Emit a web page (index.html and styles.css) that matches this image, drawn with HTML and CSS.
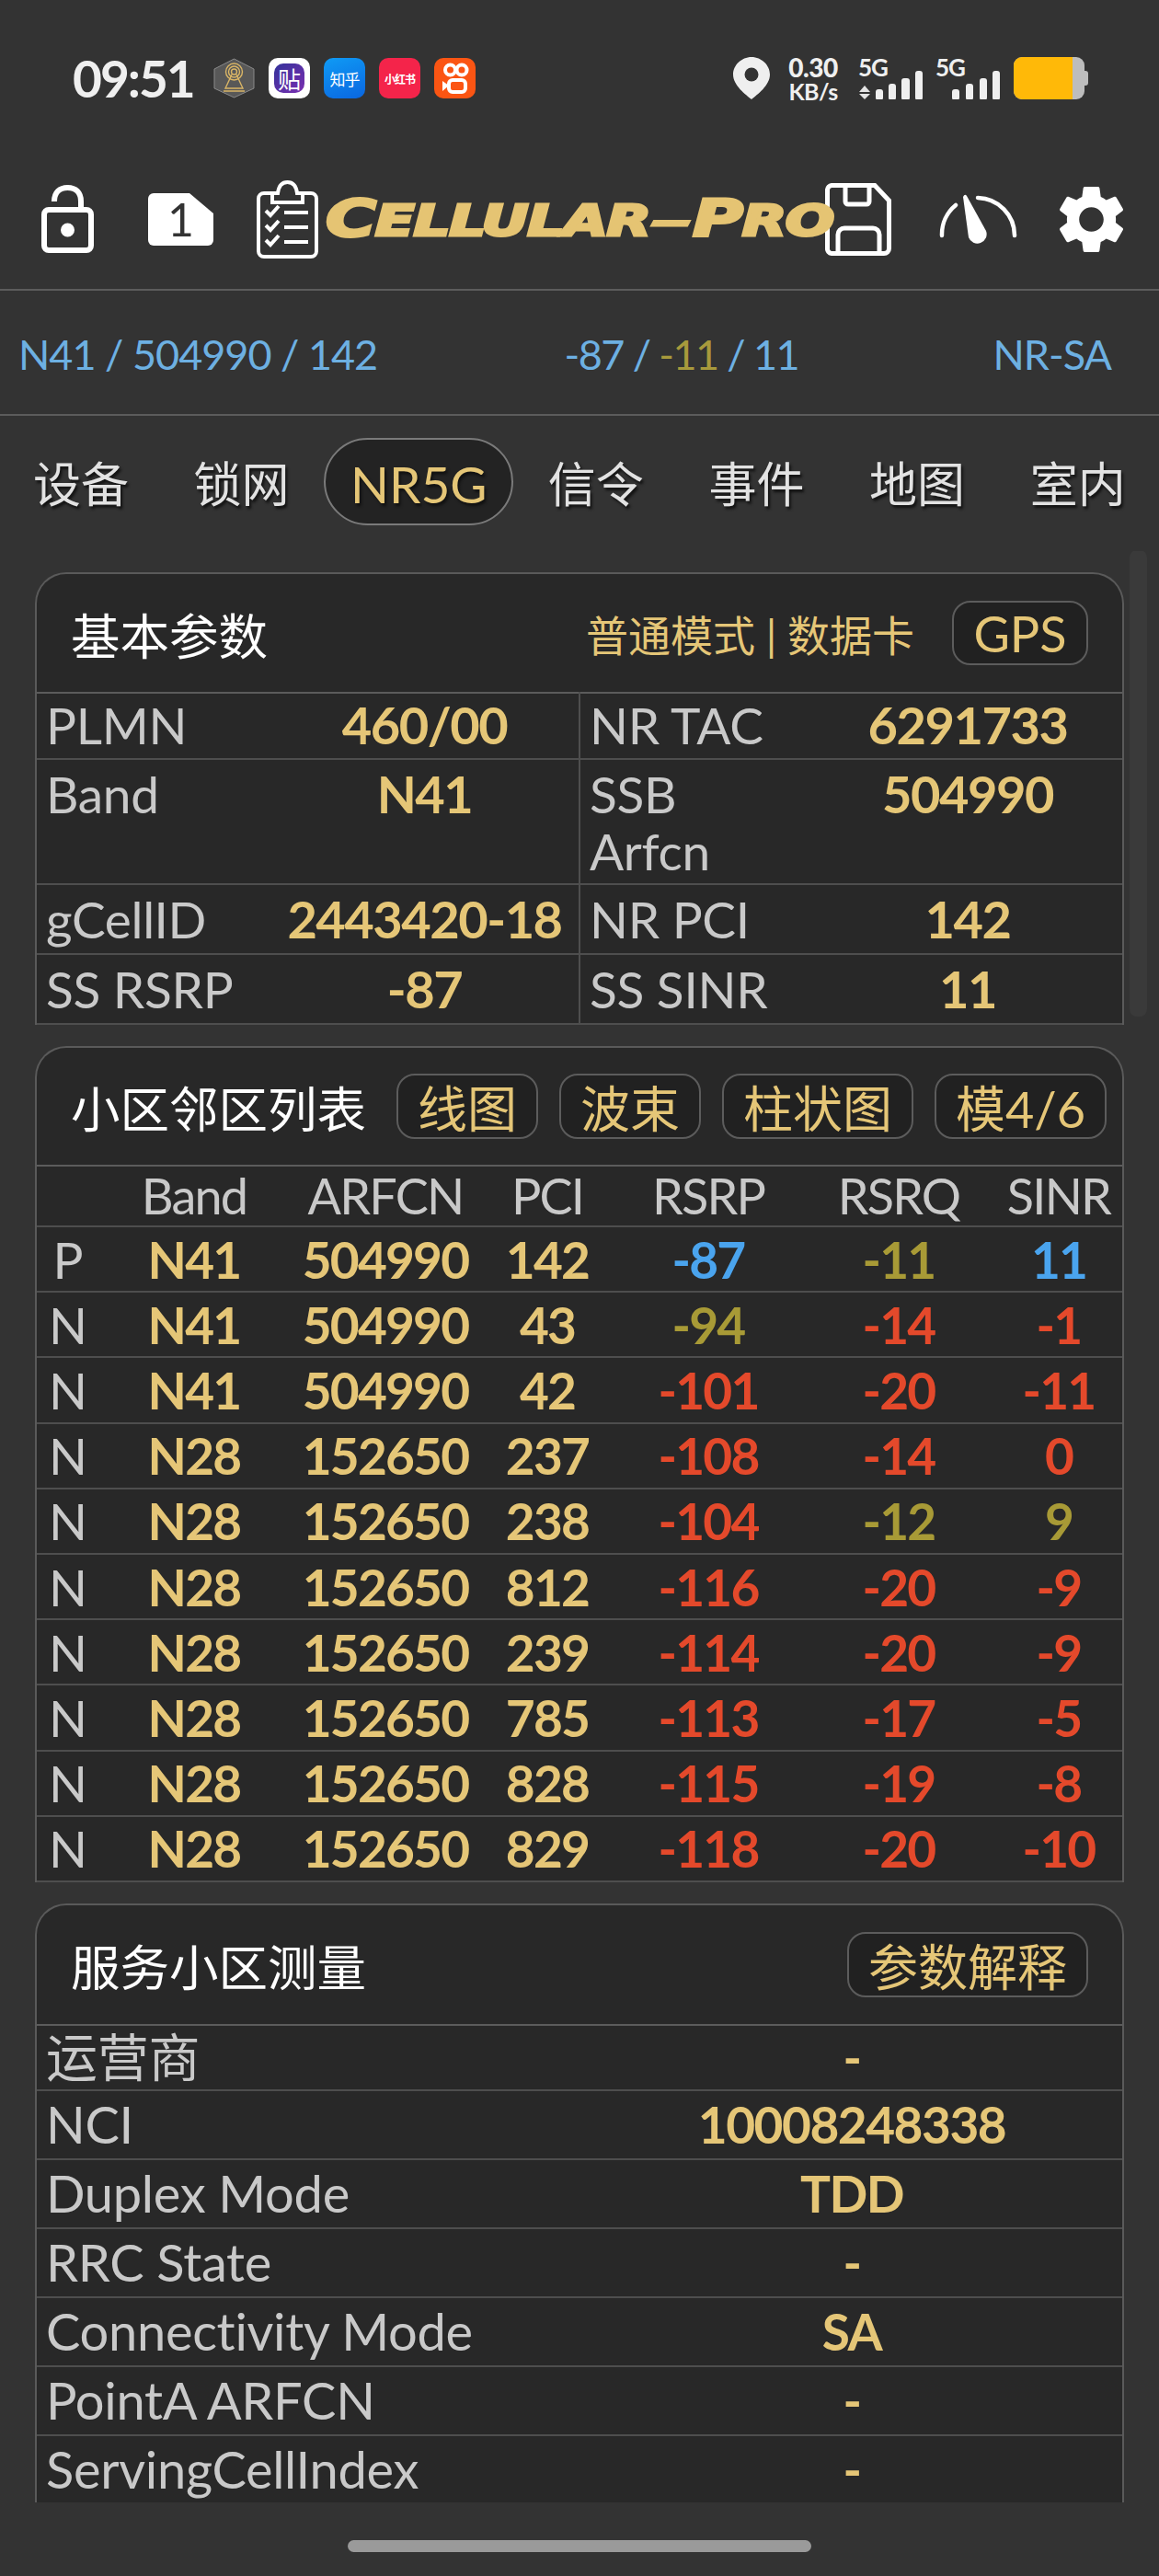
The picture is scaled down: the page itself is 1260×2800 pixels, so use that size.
FILE: index.html
```html
<!DOCTYPE html>
<html lang="en">
<head>
  <meta charset="UTF-8">
  <meta name="viewport" content="width=device-width, initial-scale=1.0">
  <title>Cellular-Pro | NR5G</title>
  <link rel="stylesheet" href="styles.css">
</head>
<body>
  <div class="screen">
    <!-- Status bar -->
    <div class="statusbar">
      <span class="time">09:51</span>
      <svg class="app-icon" viewBox="0 0 45 44">
        <polygon points="22.5,1 44,12 44,33 22.5,43 1,33 1,12" fill="#585858" stroke="#8a8a8a"/>
        <g fill="none" stroke="#d9b566" stroke-width="1.4">
          <circle cx="22.5" cy="15" r="3"/>
          <circle cx="22.5" cy="15" r="6"/>
          <circle cx="22.5" cy="15" r="9"/>
          <path d="M20 18 L13 33 H32 L25 18 M11 36 H34"/>
        </g>
      </svg>
      <span class="app-icon app-tie"><span class="tie-blob">贴</span></span>
      <span class="app-icon app-zhihu">知乎</span>
      <span class="app-icon app-xhs">小红书</span>
      <svg class="app-icon" viewBox="0 0 45 44">
        <rect width="45" height="44" rx="10" fill="#fb5513"/>
        <g fill="none" stroke="#fff" stroke-width="4">
          <circle cx="17.5" cy="13" r="5.5"/>
          <circle cx="30" cy="13" r="5.5"/>
          <rect x="16" y="24" width="18" height="13" rx="4"/>
        </g>
        <path d="M16 30 L9 25 V36 Z" fill="#fff"/>
      </svg>

      <div class="status-right">
        <svg class="pin" viewBox="0 0 40 46">
          <path d="M20 0 C9 0 0 9 0 19 C0 31 14 41 20 46 C26 41 40 31 40 19 C40 9 31 0 20 0 Z" fill="#efefef"/>
          <circle cx="20" cy="19" r="7.5" fill="#333"/>
        </svg>
        <div class="speed"><b>0.30</b><span>KB/s</span></div>
        <div class="signal">
          <svg viewBox="0 0 71 46">
            <polygon points="7,31 13,38 1,38" fill="#e4e4e4"/>
            <polygon points="1,40 13,40 7,46" fill="#e4e4e4"/>
            <rect x="19" y="35" width="8" height="12" rx="3" fill="#efefef"/>
            <rect x="33" y="29" width="8" height="18" rx="3" fill="#efefef"/>
            <rect x="47" y="23" width="9" height="24" rx="3" fill="#efefef"/>
            <rect x="62" y="15" width="8" height="32" rx="3" fill="#efefef"/>
          </svg>
          <span class="net-label">5G</span>
        </div>
        <div class="signal signal-second">
          <svg viewBox="0 0 71 46">
            <rect x="18" y="35" width="8" height="12" rx="3" fill="#efefef"/>
            <rect x="33" y="29" width="8" height="18" rx="3" fill="#efefef"/>
            <rect x="48" y="23" width="8" height="24" rx="3" fill="#efefef"/>
            <rect x="62" y="15" width="8" height="32" rx="3" fill="#efefef"/>
          </svg>
          <span class="net-label">5G</span>
        </div>
        <svg class="battery" viewBox="0 0 81 46">
          <rect x="74" y="15" width="7" height="16" rx="3" fill="#bdbdbd"/>
          <rect x="0" y="0" width="77" height="46" rx="9" fill="#bdbdbd"/>
          <path d="M9 0 H64 V46 H9 A9 9 0 0 1 0 37 V9 A9 9 0 0 1 9 0 Z" fill="#ffb908"/>
        </svg>
      </div>
    </div>

    <!-- Toolbar -->
    <div class="toolbar">
      <svg class="icon-lock" viewBox="0 0 57 74" fill="none" stroke="#fff" stroke-width="6">
        <path d="M14 18 C14 8 20 3 28.5 3 C37 3 43 8 43 18 V27"/>
        <rect x="3" y="27" width="51" height="44" rx="5"/>
        <circle cx="28.5" cy="49" r="7.5" fill="#fff" stroke="none"/>
      </svg>
      <div class="icon-sim">
        <svg viewBox="0 0 71 57">
          <path d="M6 0 H45 L71 22 V51 A6 6 0 0 1 65 57 H6 A6 6 0 0 1 0 51 V6 A6 6 0 0 1 6 0 Z" fill="#fff"/>
        </svg>
        <span class="sim-number">1</span>
      </div>
      <svg class="icon-clip" viewBox="0 0 67 85" fill="none" stroke="#fff" stroke-width="4">
        <rect x="2" y="14" width="63" height="69" rx="6"/>
        <path d="M17 24 V14 H23 C24 6 28 2 33.5 2 C39 2 43 6 44 14 H50 V24 Z" fill="#333"/>
        <path d="M30 35 H56 M30 51 H56 M30 67 H56"/>
        <path d="M10 33 L15 38 L24 28 M10 49 L15 54 L24 44 M10 65 L15 70 L24 60"/>
      </svg>
      <div class="logo-box">
        <div class="logo"><span class="logo-big">C</span>ELLULAR<span class="logo-dash">-</span><span class="logo-big">P</span>RO</div>
      </div>
      <svg class="icon-save" viewBox="0 0 72 79" fill="none" stroke="#fff" stroke-width="5">
        <path d="M7 2.5 H54 L69.5 19 V71 A5.5 5.5 0 0 1 64 76.5 H7 A5 5 0 0 1 2.5 71 V7 A5 5 0 0 1 7 2.5 Z"/>
        <path d="M22 3 V20 A3 3 0 0 0 25 23 H45 A3 3 0 0 0 48 20 V3"/>
        <path d="M14 76 V56 A7 7 0 0 1 21 49 H52 A7 7 0 0 1 59 56 V76"/>
      </svg>
      <svg class="icon-gauge" viewBox="0 0 86 56">
        <g fill="none" stroke="#fff" stroke-width="4.5" stroke-linecap="round">
          <path d="M3 46 A41 41 0 0 1 18 13"/>
          <path d="M42 5 A41 41 0 0 1 82 46"/>
        </g>
        <path d="M26 4 Q28 0 30 3 L51 41 A10 10 0 1 1 32 48 Z" fill="#fff"/>
      </svg>
      <svg class="icon-gear" viewBox="2.4 2.4 19.2 19.2">
        <path fill="#fff" fill-rule="evenodd" d="M19.14,12.94c0.04-0.3,0.06-0.61,0.06-0.94c0-0.32-0.02-0.64-0.07-0.94l2.03-1.58c0.18-0.14,0.23-0.41,0.12-0.61l-1.92-3.32c-0.12-0.22-0.37-0.29-0.59-0.22l-2.39,0.96c-0.5-0.38-1.03-0.7-1.62-0.94L14.4,2.81c-0.04-0.24-0.24-0.41-0.48-0.41h-3.84c-0.24,0-0.43,0.17-0.47,0.41L9.25,5.35C8.66,5.59,8.12,5.92,7.63,6.29L5.24,5.33c-0.22-0.08-0.47,0-0.59,0.22L2.74,8.87C2.62,9.08,2.66,9.34,2.86,9.48l2.03,1.58C4.84,11.36,4.8,11.69,4.8,12s0.02,0.64,0.07,0.94l-2.03,1.58c-0.18,0.14-0.23,0.41-0.12,0.61l1.92,3.32c0.12,0.22,0.37,0.29,0.59,0.22l2.39-0.96c0.5,0.38,1.03,0.7,1.62,0.94l0.36,2.54c0.05,0.24,0.24,0.41,0.48,0.41h3.84c0.24,0,0.44-0.17,0.47-0.41l0.36-2.54c0.59-0.24,1.13-0.56,1.62-0.94l2.39,0.96c0.22,0.08,0.47,0,0.59-0.22l1.92-3.32c0.12-0.22,0.07-0.47-0.12-0.61L19.14,12.94z M12,15.6c-1.98,0-3.6-1.62-3.6-3.6s1.62-3.6,3.6-3.6s3.6,1.62,3.6,3.6S13.98,15.6,12,15.6z"/>
      </svg>
    </div>

    <!-- Summary line -->
    <div class="summary">
      <span class="blue-soft">N41 / 504990 / 142</span>
      <span class="summary-mid"><span class="blue-soft">-87 / </span><span class="olive-soft">-11</span><span class="blue-soft"> / 11</span></span>
      <span class="blue-soft">NR-SA</span>
    </div>

    <!-- Tabs -->
    <nav class="tabs">
      <a>设备</a>
      <a>锁网</a>
      <a class="active">NR5G</a>
      <a>信令</a>
      <a>事件</a>
      <a>地图</a>
      <a>室内</a>
    </nav>

    <div class="content">
      <div class="scrollbar"></div>

      <!-- Basic params -->
      <section class="card">
        <div class="card-head">
          <h2>基本参数</h2>
          <div class="head-right">
            <span class="mode">普通模式 | 数据卡</span>
            <span class="btn btn-gps">GPS</span>
          </div>
        </div>
        <table class="params">
          <tr><td class="label">PLMN</td><td class="value">460/00</td><td class="label split">NR TAC</td><td class="value">6291733</td></tr>
          <tr class="tall"><td class="label">Band</td><td class="value">N41</td><td class="label split">SSB<br>Arfcn</td><td class="value">504990</td></tr>
          <tr><td class="label">gCellID</td><td class="value">2443420-18</td><td class="label split">NR PCI</td><td class="value">142</td></tr>
          <tr><td class="label">SS RSRP</td><td class="value">-87</td><td class="label split">SS SINR</td><td class="value">11</td></tr>
        </table>
      </section>

      <!-- Neighbour cells -->
      <section class="card">
        <div class="card-head head-cells">
          <h2>小区邻区列表</h2>
          <div class="btn-group">
            <span class="btn">线图</span>
            <span class="btn">波束</span>
            <span class="btn">柱状图</span>
            <span class="btn">模4/6</span>
          </div>
        </div>
        <table class="cells">
          <colgroup>
            <col class="c-type"><col class="c-band"><col class="c-arfcn"><col class="c-pci"><col class="c-rsrp"><col class="c-rsrq"><col class="c-sinr">
          </colgroup>
          <tr class="cells-head"><th></th><th>Band</th><th>ARFCN</th><th>PCI</th><th>RSRP</th><th>RSRQ</th><th>SINR</th></tr>
          <tr><td class="type">P</td><td>N41</td><td>504990</td><td>142</td><td class="blue">-87</td><td class="olive">-11</td><td class="blue">11</td></tr>
          <tr><td class="type">N</td><td>N41</td><td>504990</td><td>43</td><td class="olive">-94</td><td class="red">-14</td><td class="red">-1</td></tr>
          <tr><td class="type">N</td><td>N41</td><td>504990</td><td>42</td><td class="red">-101</td><td class="red">-20</td><td class="red">-11</td></tr>
          <tr><td class="type">N</td><td>N28</td><td>152650</td><td>237</td><td class="red">-108</td><td class="red">-14</td><td class="red">0</td></tr>
          <tr><td class="type">N</td><td>N28</td><td>152650</td><td>238</td><td class="red">-104</td><td class="olive">-12</td><td class="olive">9</td></tr>
          <tr><td class="type">N</td><td>N28</td><td>152650</td><td>812</td><td class="red">-116</td><td class="red">-20</td><td class="red">-9</td></tr>
          <tr><td class="type">N</td><td>N28</td><td>152650</td><td>239</td><td class="red">-114</td><td class="red">-20</td><td class="red">-9</td></tr>
          <tr><td class="type">N</td><td>N28</td><td>152650</td><td>785</td><td class="red">-113</td><td class="red">-17</td><td class="red">-5</td></tr>
          <tr><td class="type">N</td><td>N28</td><td>152650</td><td>828</td><td class="red">-115</td><td class="red">-19</td><td class="red">-8</td></tr>
          <tr><td class="type">N</td><td>N28</td><td>152650</td><td>829</td><td class="red">-118</td><td class="red">-20</td><td class="red">-10</td></tr>
        </table>
      </section>

      <!-- Serving cell -->
      <section class="card">
        <div class="card-head head-serving">
          <h2>服务小区测量</h2>
          <span class="btn">参数解释</span>
        </div>
        <table class="serving">
          <tr><td class="label">运营商</td><td class="value">-</td></tr>
          <tr><td class="label">NCI</td><td class="value">10008248338</td></tr>
          <tr><td class="label">Duplex Mode</td><td class="value">TDD</td></tr>
          <tr><td class="label">RRC State</td><td class="value">-</td></tr>
          <tr><td class="label">Connectivity Mode</td><td class="value">SA</td></tr>
          <tr><td class="label">PointA ARFCN</td><td class="value">-</td></tr>
          <tr><td class="label">ServingCellIndex</td><td class="value">-</td></tr>
        </table>
      </section>
    </div>

    <div class="home-area"><div class="home-bar"></div></div>
  </div>
</body>
</html>
```

FILE: styles.css
```css
* {
  margin: 0;
  padding: 0;
  box-sizing: border-box;
}

body {
  font-family: Lato, "Noto Sans CJK SC", sans-serif;
  background-color: #333333;
  overflow: hidden;
}

.screen {
  width: 1260px;
  height: 2800px;
  display: flex;
  flex-direction: column;
  overflow: hidden;
}

svg {
  display: block;
  flex: none;
}

/* Status bar */
.statusbar {
  height: 170px;
  display: flex;
  align-items: center;
  padding-left: 79px;
}

.time {
  width: 153px;
  font-size: 55px;
  font-weight: 700;
  letter-spacing: -2px;
  color: #efefef;
}

.app-icon {
  width: 45px;
  height: 44px;
  margin-right: 15px;
  flex: none;
}

span.app-icon {
  display: flex;
  align-items: center;
  justify-content: center;
  border-radius: 10px;
  color: #fff;
  font-family: "Noto Sans CJK SC", sans-serif;
}

.app-tie {
  background-color: #fff;
}

.tie-blob {
  width: 33px;
  height: 32px;
  border-radius: 10px;
  background: linear-gradient(135deg, #33329a, #7a2fb0);
  font-size: 25px;
  line-height: 32px;
  text-align: center;
}

.app-zhihu {
  background: linear-gradient(160deg, #0f9bf5, #0a66e0);
  font-size: 17px;
  letter-spacing: -1px;
}

.app-xhs {
  background-color: #f4244a;
  font-size: 12px;
  font-weight: 700;
  letter-spacing: -1px;
}

.status-right {
  margin-left: auto;
  padding-right: 77px;
  display: flex;
  align-items: center;
}

.pin {
  width: 40px;
  height: 46px;
}

.speed {
  width: 60px;
  margin-left: 17px;
  color: #efefef;
  font-weight: 700;
  text-align: center;
  display: flex;
  flex-direction: column;
  align-items: center;
}

.speed b {
  font-size: 28px;
  line-height: 27px;
  letter-spacing: -0.5px;
}

.speed span {
  font-size: 25px;
  line-height: 24px;
  letter-spacing: -0.5px;
}

.signal {
  width: 71px;
  height: 46px;
  margin-left: 19px;
  display: grid;
}

.signal svg {
  grid-area: 1 / 1;
  width: 71px;
  height: 46px;
}

.signal-second {
  margin-left: 13px;
}

.net-label {
  grid-area: 1 / 1;
  justify-self: start;
  align-self: start;
  font-size: 26px;
  line-height: 22px;
  font-weight: 700;
  letter-spacing: -1px;
  color: #efefef;
}

.battery {
  width: 81px;
  height: 46px;
  margin-left: 14px;
}

/* Toolbar */
.toolbar {
  height: 146px;
  padding: 0 0 8px 45px;
  border-bottom: 2px solid #5c5c5c;
  display: flex;
  align-items: center;
}

.icon-lock {
  width: 57px;
  height: 74px;
}

.icon-sim {
  width: 71px;
  height: 57px;
  margin-left: 59px;
  display: grid;
  place-items: center;
}

.icon-sim svg {
  grid-area: 1 / 1;
  width: 71px;
  height: 57px;
}

.sim-number {
  grid-area: 1 / 1;
  font-size: 50px;
  line-height: 57px;
  color: #333;
}

.icon-clip {
  width: 67px;
  height: 85px;
  margin-left: 47px;
}

.logo-box {
  width: 543px;
  margin-left: 8px;
  flex: none;
}

.logo {
  width: max-content;
  white-space: nowrap;
  font-family: "DejaVu Sans", sans-serif;
  font-size: 47px;
  font-weight: 700;
  font-style: italic;
  line-height: 60px;
  letter-spacing: -1px;
  color: #e5c473;
  -webkit-text-stroke: 3px #e5c473;
  transform: scaleX(1.34);
  transform-origin: left center;
}

.logo-big {
  font-size: 56px;
}

.logo-dash {
  display: inline-block;
  transform: scaleX(2);
  margin: 0 8px;
  -webkit-text-stroke: 1px #e5c473;
}

.icon-save {
  width: 72px;
  height: 79px;
}

.icon-gauge {
  width: 86px;
  height: 56px;
  margin-left: 52px;
}

.icon-gear {
  width: 71px;
  height: 71px;
  margin-left: 44px;
}

/* Summary */
.summary {
  height: 136px;
  padding: 4px 52px 0 20px;
  border-bottom: 2px solid #5c5c5c;
  display: flex;
  align-items: center;
  justify-content: space-between;
  font-size: 45px;
  letter-spacing: -1px;
  white-space: pre;
}

.summary-mid {
  margin-right: 8px;
  letter-spacing: -1.6px;
}

.blue-soft {
  color: #6db0e2;
}

.olive-soft {
  color: #a89a3c;
}

/* Tabs */
.tabs {
  height: 147px;
  padding: 24px 0 0 3px;
  display: flex;
  gap: 4.6px;
  align-items: flex-start;
}

.tabs a {
  flex: none;
  height: 95px;
  padding: 0 31px;
  font-size: 52px;
  line-height: 96px;
  color: #e2e2e2;
  text-shadow: 2px 3px 3px #111;
  border: 2px solid transparent;
  border-radius: 48px;
  white-space: nowrap;
}

.tabs a.active {
  width: 206px;
  padding: 0;
  text-align: center;
  font-size: 55px;
  color: #e5c677;
  background-color: #232323;
  border-color: #7a7a7a;
}

/* Cards */
.content {
  position: relative;
  height: 2121px;
  padding: 23px 38px 0;
  overflow: hidden;
}

.scrollbar {
  position: absolute;
  top: -1px;
  right: 13px;
  width: 19px;
  height: 507px;
  border-radius: 8px;
  background-color: #3a3a3a;
}

.card {
  position: relative;
  margin-bottom: 23px;
  background-color: #282828;
  border: 2px solid #5a5a5a;
  border-bottom: none;
  border-radius: 34px 34px 0 0;
}

.card-head {
  height: 128px;
  padding: 0 37px 0 37px;
  display: flex;
  align-items: center;
  justify-content: space-between;
}

.card-head h2 {
  font-size: 53.5px;
  font-weight: 400;
  color: #fff;
}

.head-right {
  display: flex;
  align-items: center;
  gap: 41px;
}

.mode {
  font-size: 46px;
  color: #e5c677;
}

.btn {
  height: 71px;
  padding: 0 21px;
  display: flex;
  align-items: center;
  background-color: #212121;
  border: 2px solid #5c5c5c;
  border-radius: 20px;
  font-size: 54px;
  color: #e5c677;
  white-space: nowrap;
}

.btn-gps {
  width: 148px;
  height: 70px;
  justify-content: center;
  padding: 0;
}

.head-cells {
  height: 127px;
  padding-right: 17px;
}

.btn-group {
  display: flex;
  gap: 23px;
}

.head-serving {
  height: 129px;
}

/* Tables */
table {
  width: 100%;
  table-layout: fixed;
  border-collapse: collapse;
  border-top: 2px solid #5c5c5c;
  border-bottom: 2px solid #5c5c5c;
}

td, th {
  font-size: 55px;
  line-height: 62px;
  letter-spacing: -0.3px;
  border-bottom: 2px solid #4e4e4e;
}

.label {
  padding: 6px 10px;
  width: 254px;
  color: #c9c9c9;
  white-space: nowrap;
  vertical-align: top;
}

.value {
  padding: 6px 0;
  font-size: 56px;
  letter-spacing: -1.5px;
  font-weight: 700;
  color: #e5c677;
  text-align: center;
  vertical-align: top;
}

.split {
  border-left: 2px solid #4e4e4e;
}

.params tr:first-child td {
  padding-top: 3px;
  padding-bottom: 5px;
}

.params .tall td {
  padding-bottom: 4px;
}

/* Neighbour table */
.cells th {
  height: 66px;
  font-size: 54px;
  font-weight: 400;
  letter-spacing: -1.8px;
  color: #c9c9c9;
  text-align: center;
}

.cells td {
  height: 71.2px;
  font-size: 55px;
  font-weight: 700;
  letter-spacing: -1.8px;
  color: #e5c677;
  text-align: center;
}

.cells td.type {
  font-size: 55px;
  font-weight: 400;
  color: #c9c9c9;
}

.cells td.red {
  color: #e4492b;
}

.cells td.olive {
  color: #a89a36;
}

.cells td.blue {
  color: #4aa4ee;
}

.c-type { width: 66px; }
.c-band { width: 210px; }
.c-arfcn { width: 206px; }
.c-pci { width: 146px; }
.c-rsrp { width: 204px; }
.c-rsrq { width: 210px; }
.c-sinr { width: 138px; }

/* Serving table */
.serving .label {
  width: 592px;
  font-size: 56px;
}

.serving .value {
  font-size: 55px;
}

.serving td {
  height: 75px;
  padding-top: 0;
  padding-bottom: 0;
  vertical-align: middle;
}

.serving tr:first-child td {
  height: 71px;
}

/* Home bar */
.home-area {
  padding-top: 41px;
  display: flex;
  justify-content: center;
}

.home-bar {
  width: 504px;
  height: 13px;
  border-radius: 7px;
  background-color: #9a9a9a;
}
```
